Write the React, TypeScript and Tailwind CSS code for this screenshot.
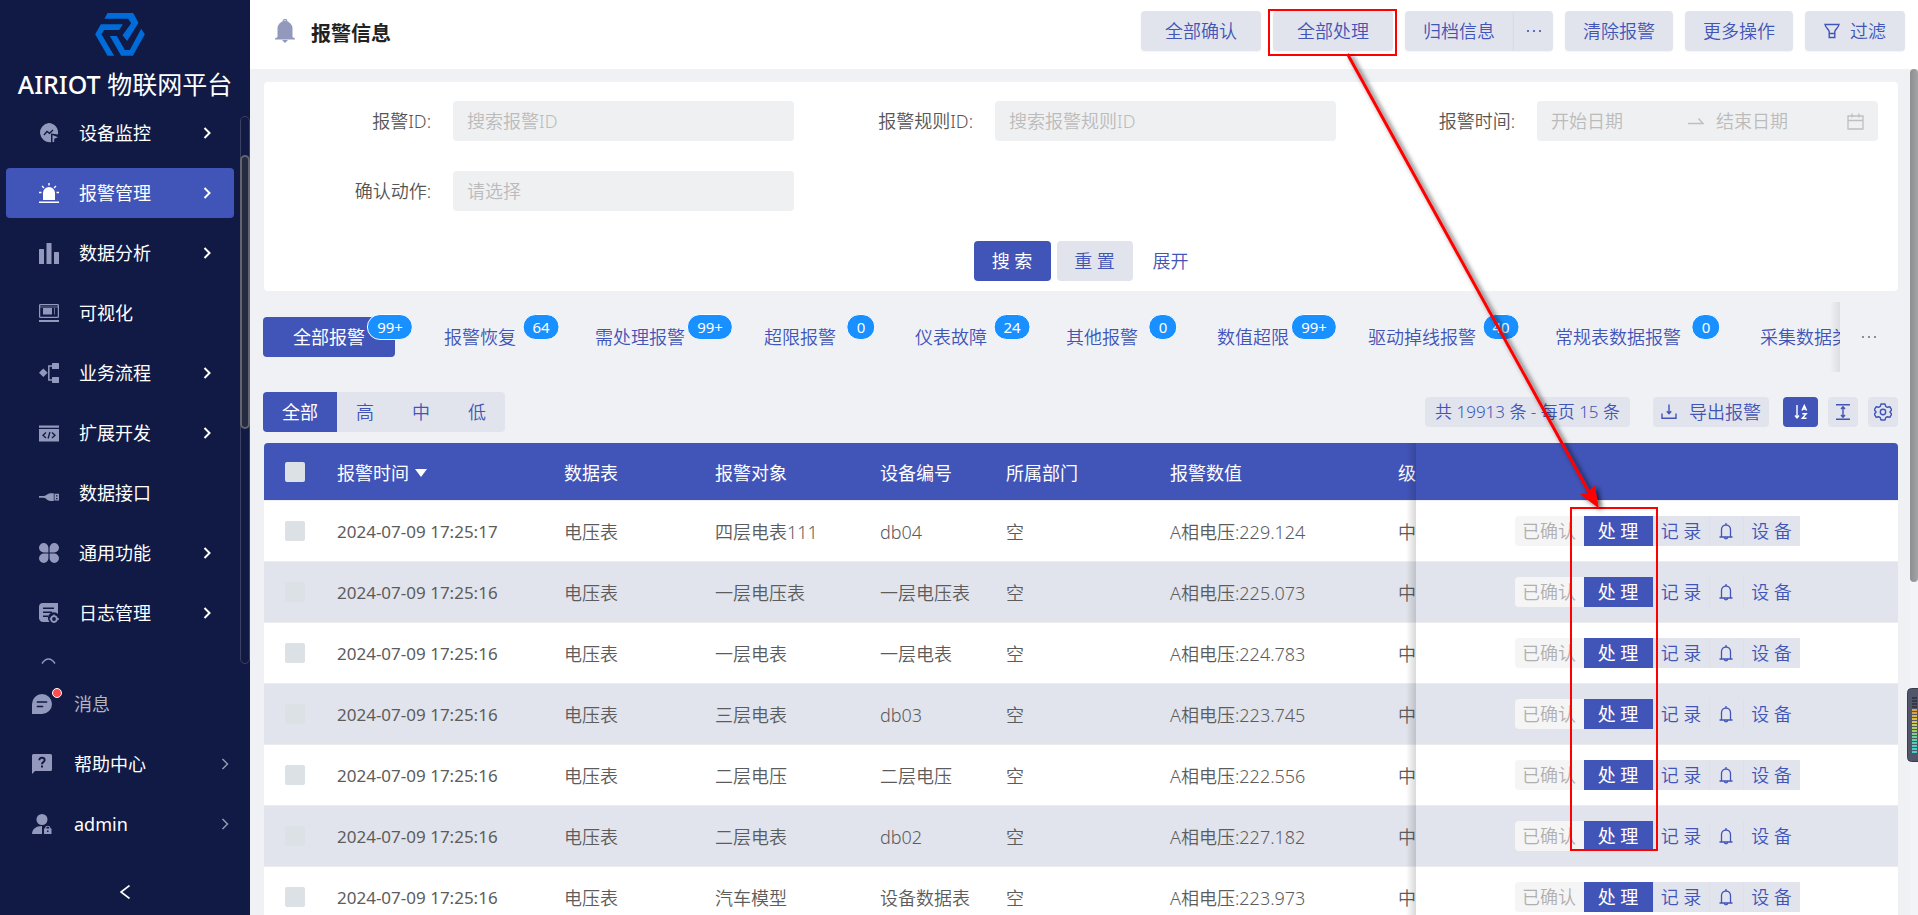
import type { ReactNode } from "react";

type MenuItem = {
  label: string;
  icon: ReactNode;
  arrow?: boolean;
  active?: boolean;
};

type AlarmRow = {
  time: string;
  table: string;
  target: string;
  device: string;
  value: string;
};

const menuItems: MenuItem[] = [
  { label: "设备监控", icon: <MonitorIcon />, arrow: true },
  { label: "报警管理", icon: <SirenIcon />, arrow: true, active: true },
  { label: "数据分析", icon: <BarsIcon />, arrow: true },
  { label: "可视化", icon: <ScreenIcon /> },
  { label: "业务流程", icon: <FlowIcon />, arrow: true },
  { label: "扩展开发", icon: <CodeIcon />, arrow: true },
  { label: "数据接口", icon: <PlugIcon /> },
  { label: "通用功能", icon: <CloverIcon />, arrow: true },
  { label: "日志管理", icon: <LogIcon />, arrow: true },
];

const tabs = [
  { label: "全部报警", count: "99+", active: true },
  { label: "报警恢复", count: "64" },
  { label: "需处理报警", count: "99+" },
  { label: "超限报警", count: "0" },
  { label: "仪表故障", count: "24" },
  { label: "其他报警", count: "0" },
  { label: "数值超限", count: "99+" },
  { label: "驱动掉线报警", count: "40" },
  { label: "常规表数据报警", count: "0" },
  { label: "采集数据类报警", count: "0" },
];

const rows: AlarmRow[] = [
  { time: "2024-07-09 17:25:17", table: "电压表", target: "四层电表111", device: "db04", value: "A相电压:229.124" },
  { time: "2024-07-09 17:25:16", table: "电压表", target: "一层电压表", device: "一层电压表", value: "A相电压:225.073" },
  { time: "2024-07-09 17:25:16", table: "电压表", target: "一层电表", device: "一层电表", value: "A相电压:224.783" },
  { time: "2024-07-09 17:25:16", table: "电压表", target: "三层电表", device: "db03", value: "A相电压:223.745" },
  { time: "2024-07-09 17:25:16", table: "电压表", target: "二层电压", device: "二层电压", value: "A相电压:222.556" },
  { time: "2024-07-09 17:25:16", table: "电压表", target: "二层电表", device: "db02", value: "A相电压:227.182" },
  { time: "2024-07-09 17:25:16", table: "电压表", target: "汽车模型", device: "设备数据表", value: "A相电压:223.973" },
];

function MonitorIcon() {
  return (
    <svg viewBox="0 0 20 20" className="h-5 w-5">
      <path fill="currentColor" d="M9.5 0a9.5 9.5 0 0 1 9.4 11.4L12 10.6V19.200A9.500 9.500 0 1 1 9.500 0z" />
      <path fill="none" stroke="#111a45" strokeWidth="1.300" d="M5 12l3-3.500 2.500 1.800L14 7" />
      <path fill="currentColor" d="M13.500 12l5.500 2.300-3.800 1.500V19h-1.700z" />
    </svg>
  );
}

function SirenIcon() {
  return (
    <svg viewBox="0 0 20 20" className="h-5 w-5" fill="currentColor">
      <path d="M4 17V10a6 6 0 0 1 12 0v7zM0 18.500h20V20H0zM9.300 0h1.400v2.500H9.300z" />
      <path fill="none" stroke="currentColor" strokeWidth="1.300" d="M3 3l2 2M17 3l-2 2M0 9.500h2.500M17.500 9.500H20" />
    </svg>
  );
}

function BarsIcon() {
  return (
    <svg viewBox="0 0 20 21" className="h-[21px] w-5" fill="currentColor">
      <rect x="0" y="6" width="5" height="15" rx="0.500" />
      <rect x="7.500" y="0" width="5" height="21" rx="0.500" />
      <rect x="15" y="9" width="5" height="12" rx="0.500" />
    </svg>
  );
}

function ScreenIcon() {
  return (
    <svg viewBox="0 0 20 20" className="h-5 w-5" fill="none" stroke="currentColor">
      <rect x="0.600" y="1.600" width="18.800" height="12.800" rx="1" strokeWidth="1.300" />
      <rect x="4" y="5" width="9" height="6.500" fill="currentColor" stroke="none" />
      <path d="M15.500 5v6.500M6 8.200h3M1 4h18" strokeWidth="1" opacity="0.700" />
      <path d="M0 18h20" strokeWidth="2" />
    </svg>
  );
}

function FlowIcon() {
  return (
    <svg viewBox="0 0 20 20" className="h-5 w-5" fill="currentColor">
      <path d="M4.300 5.500l4.300 4.300-4.300 4.300L0 9.800z" />
      <rect x="13" y="0" width="7" height="6" rx="0.500" />
      <rect x="13" y="14" width="7" height="6" rx="0.500" />
      <path fill="none" stroke="currentColor" strokeWidth="1.500" d="M13.500 3H9.800v14h3.700" />
    </svg>
  );
}

function CodeIcon() {
  return (
    <svg viewBox="0 0 20 20" className="h-5 w-5">
      <path fill="currentColor" d="M0 2.500h20v2.300H0zM0 6h20v12.500H0z" />
      <path fill="none" stroke="#111a45" strokeWidth="1.300" d="M7 9.500L4 12.200 7 15M13 9.500l3 2.700L13 15M10.900 9l-1.800 6.500" />
    </svg>
  );
}

function PlugIcon() {
  return (
    <svg viewBox="0 0 20 20" className="h-5 w-5" fill="currentColor">
      <path d="M0 13h4.500l1.500-.3 2.500-1.500c1-.7 2-.9 3-.9h3.300v7.700h-3.300c-1 0-2-.2-3-.9L6 15l-1.500-.3H0z" />
      <path fillRule="evenodd" d="M15.500 10.800h4.500v6.700h-4.500zM17 12.200v1.200h1.500v-1.200zM17 15v1.200h1.500V15z" />
    </svg>
  );
}

function CloverIcon() {
  return (
    <svg viewBox="0 0 20 20" className="h-5 w-5" fill="currentColor">
      <path d="M4.700 0a4.700 4.700 0 0 1 4.700 4.700V9.400H4.700a4.700 4.700 0 0 1 0-9.400zM15.300 0a4.700 4.700 0 0 1 0 9.400h-4.700V4.700A4.700 4.700 0 0 1 15.300 0zM4.700 10.600h4.700v4.700a4.700 4.700 0 1 1-4.700-4.700zM10.600 10.600h4.700a4.700 4.700 0 1 1-4.700 4.700z" />
    </svg>
  );
}

function LogIcon() {
  return (
    <svg viewBox="0 0 20 20" className="h-5 w-5">
      <path fill="currentColor" d="M4 0h15v11a5.500 5.500 0 0 0-8.500 8H4.500A4.500 4.500 0 0 1 0 15.500V4a4 4 0 0 1 4-4z" />
      <path stroke="#111a45" strokeWidth="1.500" d="M4 5.300h11M4 9.300h9M4 13.300h5" />
      <circle cx="15" cy="16" r="2.800" fill="none" stroke="currentColor" strokeWidth="1.800" />
      <path stroke="currentColor" strokeWidth="1.300" d="M15 11.500v2M15 18.500v1.500M10.700 16h2M17.500 16H20" />
    </svg>
  );
}

function BellOutline() {
  return (
    <svg viewBox="0 0 14 18" className="h-[18px] w-[14px]" fill="none" stroke="currentColor" strokeWidth="1.300">
      <path d="M2.500 15V7.500a4.500 4.500 0 0 1 9 0V15M0.500 15h13M7 1v2M5.300 15.300a1.700 1.500 0 0 0 3.400 0" />
    </svg>
  );
}

function Chevron({ className }: { className: string }) {
  return (
    <svg viewBox="0 0 8 12" className={className} fill="none" stroke="currentColor">
      <path d="M1.500 1l5 5-5 5" />
    </svg>
  );
}

function Logo() {
  return (
    <svg viewBox="283 39 149 129" className="mr-[11px] h-[43px] w-[50px]" fill="#006cd9">
      <path d="M311 56l9-17h77l16 29-34 55-14-17 26-36-9-14z" />
      <path d="M366 73l-11 17h-45l-8 13 38 64h-20l-37-64 17-30z" />
      <path d="M327 108h21l24 42h15l34-64 11 17-36 64h-35z" />
    </svg>
  );
}

function Sidebar() {
  return (
    <aside className="flex w-[250px] shrink-0 flex-col bg-[#111a45] font-normal text-white">
      <div className="flex h-[116px] shrink-0 flex-col items-center pt-[13px]">
        <Logo />
        <h1 className="mt-2.5 text-[25px] leading-9 whitespace-nowrap">
          <span className="font-medium">AIRIOT</span> 物联网平台
        </h1>
      </div>

      <div className="flex min-h-0 flex-1 justify-between overflow-hidden">
        <nav className="-mt-2 flex-1 px-1.5">
          {menuItems.map((item) => (
            <a
              key={item.label}
              href="#"
              className={`mb-2.5 flex h-[50px] items-center rounded pr-[23px] pl-[33px] ${
                item.active ? "bg-[#4154b8]" : ""
              }`}
            >
              <span className={item.active ? "text-white" : "text-[#9299bd]"}>{item.icon}</span>
              <span className="ml-5 flex-1">{item.label}</span>
              {item.arrow && <Chevron className="h-3 w-2 stroke-2" />}
            </a>
          ))}
          <svg viewBox="0 0 20 20" className="mt-5 ml-[33px] h-5 w-5 text-[#9299bd]" fill="none" stroke="currentColor">
            <path d="M3 5.500c4-6 9-6 13 0" strokeWidth="1.500" />
          </svg>
        </nav>
        <div className="h-full w-2.5 rounded-md border border-[#3a4060] pt-[38px]">
          <div className="-mx-px h-[274px] rounded-md border-2 border-[#62656f] bg-[#252b40]" />
        </div>
      </div>

      <div className="shrink-0 pt-2.5">
        <a href="#" className="flex h-[60px] items-center pl-8 text-[#b4b5bd]">
          <span className="relative text-[#9299bd]">
            <svg viewBox="0 0 20 20" className="h-5 w-5">
              <path fill="currentColor" d="M10 0a10 10 0 0 1 0 20H0V10A10 10 0 0 1 10 0z" />
              <path stroke="#111a45" strokeWidth="1.700" strokeLinecap="round" d="M5.500 8h9M5.500 12.500h5" />
            </svg>
            <span className="absolute -top-1.5 -right-2.5 h-2.5 w-2.5 rounded-full border border-white bg-[#ff4d4f]" />
          </span>
          <span className="ml-[22px]">消息</span>
        </a>
        <a href="#" className="flex h-[60px] items-center pr-[21px] pl-8">
          <svg viewBox="0 0 20 20" className="h-5 w-5 text-[#9299bd]">
            <path fill="currentColor" d="M1.500 0h17A1.500 1.500 0 0 1 20 1.500v14a1.500 1.500 0 0 1-1.500 1.500H3l-3 3V1.500A1.500 1.500 0 0 1 1.500 0z" />
            <path fill="none" stroke="#111a45" strokeWidth="2" d="M7.300 6.200c0-3.600 5.600-3.200 5.300 0C12.500 8 10 8 10 10.300M10 11.500v2" />
          </svg>
          <span className="ml-[22px] flex-1">帮助中心</span>
          <Chevron className="h-3 w-2 stroke-[1.500] text-[#9299ad]" />
        </a>
        <a href="#" className="flex h-[60px] items-center pr-[21px] pl-8">
          <svg viewBox="0 0 20 20" className="h-5 w-5 text-[#9299bd]" fill="currentColor">
            <circle cx="10" cy="5.500" r="5.500" />
            <path d="M0 20c0-5 4-8 10-8v8z" />
            <path fillRule="evenodd" d="M12 14.500h1V14a2.800 2.800 0 0 1 5.500 0v.5h1V20H12zM14.300 14.500h3V14a1.500 1.500 0 0 0-3 0zM15 16.500V18h1.500v-1.500z" />
          </svg>
          <span className="ml-[22px] flex-1">admin</span>
          <Chevron className="h-3 w-2 stroke-[1.500] text-[#9299ad]" />
        </a>
        <button type="button" aria-label="收起菜单" className="flex h-[61px] w-full items-center justify-center pt-[15px]">
          <svg viewBox="0 0 10 14" className="h-3.5 w-2.5" fill="none" stroke="currentColor" strokeWidth="1.600">
            <path d="M9.500 0.500L1 7l8.500 6.500" />
          </svg>
        </button>
      </div>
    </aside>
  );
}

function HeaderBar() {
  const base = "flex h-10 items-center justify-center rounded bg-[#e1e4ec] text-[#4154b8] shadow-xs";

  return (
    <header className="flex h-[69px] shrink-0 justify-between bg-white pt-[11px] pr-[13px] pl-[25px]">
      <div className="flex h-11 items-center">
        <svg viewBox="0 0 20 24" className="-mt-1 h-6 w-5 text-[#9299bd]">
          <path fill="currentColor" d="M2.500 18V9.500a7.500 7.500 0 0 1 15 0V18l2.500 1.500v1H0v-1zM7 21h6l-3 3z" />
          <circle cx="10" cy="2.200" r="1.700" fill="none" stroke="currentColor" strokeWidth="1.300" />
        </svg>
        <h2 className="ml-4 pt-0.5 text-xl font-bold text-[#222]">报警信息</h2>
      </div>
      <div className="flex gap-3">
        <button type="button" className={`${base} px-6`}>全部确认</button>
        <button type="button" className={`${base} px-6`}>全部处理</button>
        <div className="flex">
          <button type="button" className={`${base} rounded-r-none px-[18px]`}>归档信息</button>
          <button type="button" aria-label="更多归档" className={`${base} w-10 rounded-l-none border-l border-[#dadde7]`}>
            <Dots />
          </button>
        </div>
        <button type="button" className={`${base} px-[18px]`}>清除报警</button>
        <button type="button" className={`${base} px-[18px]`}>更多操作</button>
        <button type="button" className={`${base} w-[100px] gap-2.5`}>
          <svg viewBox="0 0 16 16" className="h-4 w-4" fill="none" stroke="currentColor" strokeWidth="1.400">
            <path d="M1 1.500h14c-.5 3-3.500 4.500-4.200 7v6H5.200v-6C4.500 6 1.500 4.500 1 1.500zM5.200 10.500h5.600" />
          </svg>
          过滤
        </button>
      </div>
    </header>
  );
}

function Dots() {
  return (
    <svg viewBox="0 0 16 4" className="h-1 w-4" fill="currentColor">
      <circle cx="2" cy="2" r="1.100" />
      <circle cx="8" cy="2" r="1.100" />
      <circle cx="14" cy="2" r="1.100" />
    </svg>
  );
}

function Field({ id, label, children }: { id: string; label: string; children: ReactNode }) {
  return (
    <div className="flex h-10 items-center pr-4">
      <label htmlFor={id} className="w-[31%] text-right whitespace-nowrap text-[#555]">
        {label}
      </label>
      <div className="ml-[22px] flex h-10 min-w-0 flex-1 items-center rounded bg-[#eff0f2] px-3.5">{children}</div>
    </div>
  );
}

function SearchForm() {
  const input = "w-full min-w-0 bg-transparent outline-none placeholder:text-[#bbb]";

  return (
    <form className="rounded bg-white px-1 pt-[19px] pb-2.5">
      <div className="grid grid-cols-3 gap-y-[30px]">
        <Field id="alarm-id" label="报警ID:">
          <input id="alarm-id" type="text" placeholder="搜索报警ID" className={input} />
        </Field>
        <Field id="rule-id" label="报警规则ID:">
          <input id="rule-id" type="text" placeholder="搜索报警规则ID" className={input} />
        </Field>
        <Field id="start-date" label="报警时间:">
          <input id="start-date" type="text" placeholder="开始日期" className={`${input} flex-1`} />
          <svg viewBox="0 0 16 8" className="mr-3 ml-1.5 h-2 w-4 shrink-0 text-[#bfbfbf]" fill="none" stroke="currentColor" strokeWidth="1.500">
            <path d="M0 6.500h15L10.500 1.500" />
          </svg>
          <input id="end-date" type="text" aria-label="结束日期" placeholder="结束日期" className={`${input} flex-1`} />
          <svg viewBox="0 0 17 17" className="h-[17px] w-[17px] shrink-0 text-[#bfbfbf]" fill="none" stroke="currentColor" strokeWidth="1.300">
            <path d="M1 3h15v13H1zM1 7.500h15M5 0.500v4M12 0.500v4" />
          </svg>
        </Field>
        <Field id="confirm-action" label="确认动作:">
          <select id="confirm-action" className="w-full appearance-none bg-transparent text-[#bbb] outline-none">
            <option>请选择</option>
          </select>
        </Field>
      </div>
      <div className="mt-[30px] flex items-center justify-center">
        <button type="button" className="h-10 w-[77px] rounded bg-[#4154b8] font-normal text-white">搜 索</button>
        <button type="button" className="ml-1.5 h-10 w-[76px] rounded bg-[#e1e4ec] text-[#4154b8]">重 置</button>
        <a href="#" className="ml-5 text-[#4154b8]">展开</a>
      </div>
    </form>
  );
}

function AlarmTabs() {
  return (
    <div className="mt-[11px] -ml-px flex h-[70px]">
      <div className="relative flex min-w-0 flex-1 items-center gap-[19px] overflow-hidden">
        {tabs.map((tab) => (
          <button
            key={tab.label}
            type="button"
            className={`relative h-10 shrink-0 rounded px-[30px] ${
              tab.active ? "bg-[#4154b8] font-normal text-white" : "text-[#4154b8]"
            }`}
          >
            {tab.label}
            <span className="absolute -top-[3px] right-[5px] flex h-[26px] min-w-[26px] translate-x-1/2 items-center justify-center rounded-full border border-white bg-[#1890ff] px-[9px] text-[15px] font-normal text-white">
              {tab.count}
            </span>
          </button>
        ))}
        <div className="absolute inset-y-0 right-0 w-2.5 bg-linear-to-r from-transparent to-black/8" />
      </div>
      <button type="button" aria-label="更多标签" className="flex w-[58px] items-center justify-center text-[#777]">
        <Dots />
      </button>
    </div>
  );
}

function Toolbar() {
  const tool = "flex h-[30px] items-center justify-center rounded text-[#4154b8] bg-[#e1e4ec]";

  return (
    <div className="mt-5 -ml-px flex h-10 items-center justify-between">
      <div className="flex h-10 overflow-hidden rounded bg-[#e1e4ec] text-[#4154b8]">
        <button type="button" className="bg-[#4154b8] px-[19px] font-normal text-white">全部</button>
        <button type="button" className="px-[19px]">高</button>
        <button type="button" className="px-[19px]">中</button>
        <button type="button" className="px-[19px]">低</button>
      </div>
      <div className="flex items-center">
        <div className={`${tool} px-2.5 text-[17px]`}>共 19913 条 - 每页 15 条</div>
        <button type="button" className={`${tool} ml-[23px] gap-3 px-2`}>
          <svg viewBox="0 0 16 16" className="h-4 w-4" fill="none" stroke="currentColor" strokeWidth="1.400">
            <path d="M1 9.500v4.800h14V9.500M8 0.500v9M5.800 7.300L8 9.800l2.200-2.500" />
          </svg>
          导出报警
        </button>
        <button type="button" aria-label="排序" className="ml-3.5 flex h-[30px] w-[35px] items-center justify-center rounded bg-[#4154b8] text-white">
          <svg viewBox="0 0 14 16" className="h-4 w-3.5" fill="none" stroke="currentColor" strokeWidth="1.400">
            <path d="M3 1v12.500M1 11.500l2 2.500 2-2.500M8 6.500l2.300-5 2.300 5M8.800 5h3M8.300 9.700h4l-4 4.600h4.200" />
          </svg>
        </button>
        <button type="button" aria-label="密度" className={`${tool} ml-2.5 w-[30px]`}>
          <svg viewBox="0 0 14 16" className="h-4 w-3.5" fill="none" stroke="currentColor" strokeWidth="1.400">
            <path d="M0 0.800h14M0 15.200h14M7 3v10M5 5l2-2.200L9 5M5 11l2 2.200L9 11" />
          </svg>
        </button>
        <button type="button" aria-label="设置" className={`${tool} ml-2.5 w-[30px]`}>
          <svg viewBox="0 0 18 18" className="h-[18px] w-[18px]" fill="none" stroke="currentColor" strokeWidth="1.400" strokeLinejoin="round">
            <path d="M7 1h4l.7 2.300 1.700 1 2.400-.6 1.900 3.300L16 8.700v.6l1.700 1.700-1.900 3.300-2.400-.6-1.700 1L11 17H7l-.7-2.300-1.700-1-2.400.6L.3 11 2 9.300v-.6L.3 7l1.900-3.300 2.400.6 1.700-1z" />
            <circle cx="9" cy="9" r="2.700" />
          </svg>
        </button>
      </div>
    </div>
  );
}

function RowCheckbox({ label }: { label: string }) {
  return (
    <input
      type="checkbox"
      aria-label={label}
      className="ml-[21px] block h-5 w-5 appearance-none rounded-xs bg-[#dce1e5]"
    />
  );
}

function AlarmTable() {
  const action = "h-[30px] bg-[#e1e4ec] text-[#4154b8] border-l border-[#dde0e9]";
  const cell = "pt-0.5 pl-[11px]";

  return (
    <table className="mt-[11px] w-full table-fixed border-separate border-spacing-0 text-left whitespace-nowrap">
      <colgroup>
        <col className="w-[62px]" />
        <col className="w-[227px]" />
        <col className="w-[151px]" />
        <col className="w-[165px]" />
        <col className="w-[126px]" />
        <col className="w-[164px]" />
        <col className="w-[228px]" />
        <col className="w-[29px]" />
        <col />
      </colgroup>
      <thead>
        <tr className="h-[58px] bg-[#4154b8] text-white *:border-b *:border-[#f0f0f0] *:p-0 *:font-normal">
          <th className="rounded-tl">
            <RowCheckbox label="全选" />
          </th>
          <th>
            <div className={`flex items-center gap-1.5 ${cell}`}>
              报警时间
              <svg viewBox="0 0 12 8" className="h-2 w-3" fill="currentColor">
                <path d="M0 0h12L6 8z" />
              </svg>
            </div>
          </th>
          <th><div className={cell}>数据表</div></th>
          <th><div className={cell}>报警对象</div></th>
          <th><div className={cell}>设备编号</div></th>
          <th><div className={cell}>所属部门</div></th>
          <th><div className={cell}>报警数值</div></th>
          <th><div className={`overflow-hidden ${cell}`}>级别</div></th>
          <th aria-label="操作" className="relative rounded-tr">
            <FixedShadow />
          </th>
        </tr>
      </thead>
      <tbody className="text-[#5c5c5c]">
        {rows.map((row, i) => (
          <tr
            key={i}
            className="h-[61px] odd:bg-white even:bg-[#e1e4ec] *:border-b *:border-[#ececf0] *:p-0"
          >
            <td><RowCheckbox label={`选择 ${row.target}`} /></td>
            <td><div className={`${cell} text-[17px] font-normal`}>{row.time}</div></td>
            <td><div className={cell}>{row.table}</div></td>
            <td><div className={cell}>{row.target}</div></td>
            <td><div className={cell}>{row.device}</div></td>
            <td><div className={cell}>空</div></td>
            <td><div className={cell}>{row.value}</div></td>
            <td><div className={`overflow-hidden ${cell}`}>中</div></td>
            <td className="relative">
              <FixedShadow />
              <div className="flex justify-center">
                <button type="button" disabled className="h-[30px] w-[69px] rounded-l bg-[#f5f5f5] text-[#b0b0b0]">
                  已确认
                </button>
                <button type="button" className="h-[30px] w-[69px] bg-[#4154b8] font-normal text-white">处 理</button>
                <button type="button" className={`${action} w-[56px]`}>记 录</button>
                <button type="button" aria-label="通知" className={`${action} flex w-[34px] items-center justify-center`}>
                  <BellOutline />
                </button>
                <button type="button" className={`${action} w-[57px]`}>设 备</button>
              </div>
            </td>
          </tr>
        ))}
      </tbody>
    </table>
  );
}

// shade to the left of the pinned action column
function FixedShadow() {
  return <div className="absolute top-0 -bottom-px -left-2.5 w-2.5 bg-linear-to-r from-transparent to-black/15" />;
}

function Annotations() {
  return (
    <svg className="pointer-events-none absolute top-0 left-0 h-[915px] w-[1918px]" fill="none" stroke="#f00" strokeWidth="2">
      <defs>
        <filter id="arrow-shadow" x="-20%" y="-20%" width="140%" height="140%">
          <feDropShadow dx="3" dy="2" stdDeviation="2.500" floodColor="#000" floodOpacity="0.700" />
        </filter>
      </defs>
      <rect x="1269" y="10" width="127" height="45" />
      <rect x="1571" y="508" width="86" height="342" />
      <g filter="url(#arrow-shadow)">
        <path d="M1347.500 54L1590 494" strokeWidth="3" />
        <path d="M1599 508.500L1580 494l8-1 6.500-8z" fill="#f00" stroke="none" />
      </g>
    </svg>
  );
}

function LevelMeter() {
  const colors = ["#d9a14a", "#d9a14a", "#dcb24d", "#d8bf50", "#d3c853", "#c3d05a", "#aed165", "#97d172", "#84d183", "#72d295", "#62d1a6", "#56d0b4", "#4ed0bf", "#4bd0c4", "#4bd0c8"];

  return (
    <svg viewBox="0 0 11 74" className="absolute top-[688px] right-0 h-[74px] w-[11px]">
      <rect x="0.500" y="0.500" width="16" height="73" rx="4" fill="#51566a" stroke="#3b3f4d" />
      {[9, 12, 15, 18].map((y) => (
        <rect key={y} x="5" y={y} width="5" height="2" fill="#363a47" />
      ))}
      {colors.map((color, i) => (
        <rect key={i} x="5" y={21 + i * 3} width="5" height="2" fill={color} />
      ))}
    </svg>
  );
}

export default function App() {
  return (
    <div className="relative flex h-screen overflow-hidden bg-[#f0f1f5] font-['Noto_Sans','Noto_Sans_CJK_SC',sans-serif] text-lg leading-6 font-[350]">
      <Sidebar />
      <div className="flex min-w-0 flex-1 flex-col">
        <HeaderBar />
        <div className="flex min-h-0 flex-1 overflow-hidden">
          <main className="min-w-0 flex-1 pt-[13px] pr-3 pl-3.5">
            <SearchForm />
            <AlarmTabs />
            <Toolbar />
            <AlarmTable />
          </main>
          <div className="w-2 bg-[#f3f4f7]">
            <div className="h-[513px] rounded bg-linear-to-r from-[#8c8e90] to-[#a3a4a6]" />
          </div>
        </div>
      </div>
      <LevelMeter />
      <Annotations />
    </div>
  );
}
